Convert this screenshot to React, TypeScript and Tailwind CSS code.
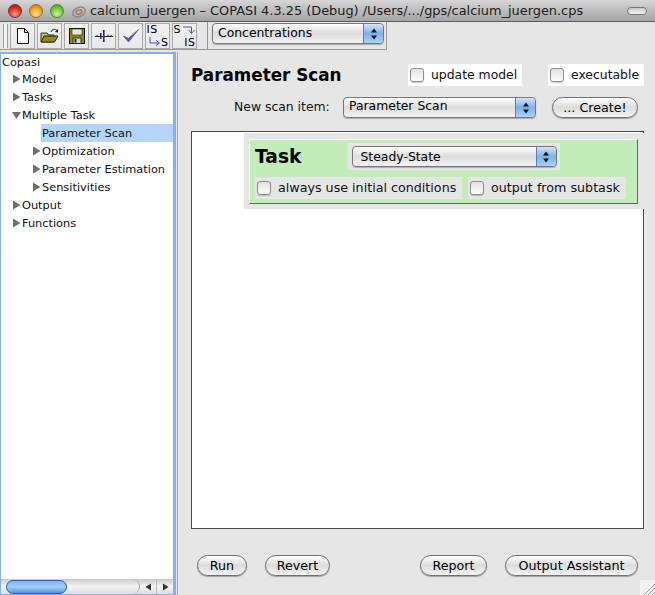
import React from "react";

const glossy = "bg-gradient-to-b from-[#ffffff] via-[#dcdcdc] to-[#f4f4f4]";

function Stepper() {
  return (
    <span className="flex w-[20px] shrink-0 self-stretch flex-col items-center justify-center gap-[2px] rounded-r-[4px] border-l border-[#5f7fae] bg-gradient-to-b from-[#d4e4f8] via-[#7fb0ec] to-[#a9d2fb]">
      <svg width="8" height="5" viewBox="0 0 8 5"><path d="M4 0.5 L7 4.5 L1 4.5 Z" fill="#111" /></svg>
      <svg width="8" height="5" viewBox="0 0 8 5"><path d="M4 4.5 L7 0.5 L1 0.5 Z" fill="#111" /></svg>
    </span>
  );
}

function Select({ label, className, textClass }: { label: string; className: string; textClass: string }) {
  return (
    <div className={`flex h-[21px] items-stretch overflow-hidden rounded-[4px] border border-[#777] ${glossy} shadow-[0_1px_1px_rgba(0,0,0,0.25)] ${className}`}>
      <span className={`flex-1 text-[12.4px] leading-[16px] text-black ${textClass}`}>{label}</span>
      <Stepper />
    </div>
  );
}

function Pill({ label, className }: { label: string; className: string }) {
  return (
    <button className={`flex h-[21px] items-center justify-center rounded-full border border-[#707070] ${glossy} text-[12.7px] text-black shadow-[0_1px_1px_rgba(0,0,0,0.3)] ${className}`}>
      {label}
    </button>
  );
}

function Check() {
  return <span className="h-[14px] w-[14px] shrink-0 rounded-[3px] border border-[#8f8f8f] bg-gradient-to-b from-[#e2e2e2] to-[#fdfdfd] shadow-[0_1px_1px_rgba(0,0,0,0.2)]" />;
}

function ToolBtn({ children }: { children: React.ReactNode }) {
  return (
    <div className="relative flex h-[26px] w-[25px] items-center justify-center bg-gradient-to-b from-[#f2f2f2] to-[#e8e8e8] shadow-[inset_0_0_0_1px_#a9a9a9]">
      {children}
    </div>
  );
}

function Caret({ open }: { open?: boolean }) {
  return (
    <svg width="10" height="10" viewBox="0 0 10 10" className="shrink-0">
      {open ? <path d="M0 2 L9 2 L4.5 9 Z" fill="#6f6f6f" /> : <path d="M1 0.5 L8.5 5 L1 9.5 Z" fill="#6f6f6f" />}
    </svg>
  );
}

function TreeRow({ label, level, open }: { label: string; level: 1 | 2; open?: boolean }) {
  const pad = level === 1 ? "pl-[10px]" : "pl-[30px]";
  return (
    <div className={`flex h-[18px] items-center ${pad}`}>
      <Caret open={open} />
      <span className="flex h-[18px] flex-1 items-center whitespace-nowrap">{label}</span>
    </div>
  );
}

export default function App() {
  return (
    <div className="flex h-[595px] w-[655px] flex-col overflow-hidden bg-[#e6e6e6] font-['DejaVu_Sans',sans-serif] text-[12px] text-[#111]">
      {/* Title bar */}
      <div className="flex h-[22px] shrink-0 items-center border-b border-[#5e5e5e] bg-gradient-to-b from-[#d6d6d6] to-[#a4a4a4] pl-[8px] pr-[8px]">
        <span className="h-[14px] w-[14px] rounded-full border border-[#8a2a22] bg-[radial-gradient(circle_at_50%_75%,#ff9d8d,#d8281c_60%,#a81810)]" />
        <span className="ml-[7px] h-[14px] w-[14px] rounded-full border border-[#a06a20] bg-[radial-gradient(circle_at_50%_75%,#ffe29a,#ee9a22_60%,#b86c10)]" />
        <span className="ml-[7px] h-[14px] w-[14px] rounded-full border border-[#4d8a2a] bg-[radial-gradient(circle_at_50%_75%,#c9f59a,#6cc03a_60%,#3f8a20)]" />
        <svg width="16" height="14" viewBox="0 0 16 14" className="ml-[7px]">
          <ellipse cx="8" cy="8" rx="6.5" ry="4.5" fill="none" stroke="#8d8d85" strokeWidth="1.6" transform="rotate(-25 8 8)" />
          <ellipse cx="8" cy="8" rx="3" ry="2" fill="none" stroke="#b0705a" strokeWidth="1.4" transform="rotate(-25 8 8)" />
        </svg>
        <span className="ml-[3px] whitespace-nowrap text-[12.9px] text-[#1c1c1c]">calcium_juergen – COPASI 4.3.25 (Debug) /Users/.../gps/calcium_juergen.cps</span>
        <span className="ml-auto h-[8px] w-[20px] rounded-full border border-[#777] bg-gradient-to-b from-[#c8c8c8] to-[#f5f5f5]" />
      </div>

      {/* Toolbar */}
      <div className="flex h-[29px] shrink-0 items-start">
        <div className="flex h-[28px] w-[207px] items-end border-b border-[#9a9a9a] pl-[3px]">
          <div className="mb-[1px] mr-[2px] h-[24px] w-[5px] shrink-0 border-x border-[#a0a0a0] bg-[#f2f2f2]" />
          <div className="flex gap-[2px]">
            <ToolBtn>
              <svg width="14" height="18" viewBox="0 0 14 18"><path d="M1.5 1.5 H8.5 L12.5 5.5 V16.5 H1.5 Z" fill="#fff" stroke="#111" /><path d="M8.5 1.5 V5.5 H12.5" fill="none" stroke="#111" /></svg>
            </ToolBtn>
            <ToolBtn>
              <svg width="20" height="18" viewBox="0 0 20 18">
                <path d="M1 15 V6 H7 L8.5 8 H14 V15 Z" fill="#c9c35a" stroke="#333" />
                <path d="M1 15 L4 9 H18 L14.5 15 Z" fill="#8f8b1e" stroke="#222" />
                <path d="M11 5 C12 2 15 1.5 17 3.5" fill="none" stroke="#222" />
                <path d="M18 2 L18 5.5 L14.8 5 Z" fill="#222" />
              </svg>
            </ToolBtn>
            <ToolBtn>
              <svg width="16" height="16" viewBox="0 0 16 16">
                <rect x="0.5" y="0.5" width="15" height="15" fill="#8c8a1a" stroke="#111" />
                <rect x="3" y="1" width="10" height="6" fill="#e8e8d0" stroke="#222" strokeWidth="0.6" />
                <rect x="4" y="10" width="8" height="5.5" fill="#d8d8d8" stroke="#111" strokeWidth="0.8" />
                <rect x="5.5" y="11" width="2" height="3.5" fill="#222" />
              </svg>
            </ToolBtn>
            <ToolBtn>
              <svg width="20" height="14" viewBox="0 0 20 14">
                <path d="M1 7.5 H19" stroke="#222" />
                <rect x="6" y="4" width="1.6" height="6" fill="#2a2a7a" />
                <rect x="9" y="1" width="1.6" height="12" fill="#2a2a7a" />
                <path d="M3 6 V8 M14 5.5 V8 M17 6 V8" stroke="#333" />
              </svg>
            </ToolBtn>
            <ToolBtn>
              <svg width="18" height="16" viewBox="0 0 18 16"><path d="M1.5 8 L6.5 14 L16.5 1.5 L6.5 10.5 Z" fill="#5a5ab4" stroke="#4f4faa" strokeWidth="0.8" /></svg>
            </ToolBtn>
            <ToolBtn>
              <div className="relative h-[24px] w-[22px] text-[11px] leading-[11px] tracking-[0.5px] text-black">
                <span className="absolute left-0 top-0">IS</span>
                <span className="absolute right-0 bottom-0">S</span>
                <svg width="12" height="10" viewBox="0 0 12 10" className="absolute left-[2px] bottom-[1px]"><path d="M1 0 V6 H10 M7 3.5 L10.5 6 L7 8.5" fill="none" stroke="#4a55b8" strokeWidth="1" /></svg>
              </div>
            </ToolBtn>
            <ToolBtn>
              <div className="relative h-[24px] w-[22px] text-[11px] leading-[11px] tracking-[0.5px] text-black">
                <span className="absolute left-0 top-0">S</span>
                <span className="absolute right-0 bottom-0">IS</span>
                <svg width="12" height="10" viewBox="0 0 12 10" className="absolute right-[1px] top-[1px]"><path d="M0 2 H8.5 V8 M5.5 5 L8.5 8.5 L11.5 5" fill="none" stroke="#4a55b8" strokeWidth="1" /></svg>
              </div>
            </ToolBtn>
          </div>
        </div>
        <div className="flex h-[28px] w-[180px] items-start border-b border-r border-l border-[#9a9a9a] pl-[4px] pt-[1px]">
          <Select label="Concentrations" className="w-[172px]" textClass="pl-[5px] pt-[1px]" />
        </div>
      </div>

      {/* Body */}
      <div className="mt-[1px] flex min-h-0 flex-1">
        {/* Tree */}
        <div className="flex w-[175px] shrink-0 flex-col border-2 border-b-[1px] border-[#84b3e6] border-l-[1px] bg-white">
          <div className="flex-1 pl-[1px] text-[11.35px] leading-[18px]">
            <div className="flex h-[16px] items-center">Copasi</div>
            <TreeRow level={1} label="Model" />
            <TreeRow level={1} label="Tasks" />
            <TreeRow level={1} open label="Multiple Task" />
            <div className="flex h-[18px] pl-[39px]"><span className="flex flex-1 items-center bg-[#b5d5ff] pl-[1px]">Parameter Scan</span></div>
            <TreeRow level={2} label="Optimization" />
            <TreeRow level={2} label="Parameter Estimation" />
            <TreeRow level={2} label="Sensitivities" />
            <TreeRow level={1} label="Output" />
            <TreeRow level={1} label="Functions" />
          </div>
          {/* Scrollbar */}
          <div className="flex h-[15px] shrink-0 items-center bg-gradient-to-b from-[#c9c9c9] via-[#f4f4f4] to-[#dedede] pl-[5px]">
            <div className="h-[14px] w-[61px] rounded-full border border-[#2d5fa8] bg-gradient-to-b from-[#7fb3ee] via-[#9fd0f8] to-[#4f94e2]" />
            <div className="flex-1 self-stretch rounded-r-full border-r border-[#aaa]" />
            <div className="flex h-full w-[17px] items-center justify-center border-r border-[#bbb]">
              <svg width="7" height="8" viewBox="0 0 7 8"><path d="M6 0.5 V7.5 L0.5 4 Z" fill="#333" /></svg>
            </div>
            <div className="flex h-full w-[16px] items-center justify-center">
              <svg width="7" height="8" viewBox="0 0 7 8"><path d="M1 0.5 V7.5 L6.5 4 Z" fill="#333" /></svg>
            </div>
          </div>
        </div>

        {/* Splitter */}
        <div className="w-[3px] shrink-0 border-x border-[#a8a8a8] bg-[#e6e6e6]" />

        {/* Main */}
        <div className="flex min-w-0 flex-1 flex-col pl-[13px] pr-[11px]">
          <div className="flex h-[44px] items-start">
            <div className="mt-[11px] w-[150px] shrink-0 whitespace-nowrap text-[16.8px] font-bold leading-[24px] text-black">Parameter Scan</div>
            <div className="ml-[67px] mt-[12px] flex h-[22px] w-[114px] shrink-0 items-center gap-[7px] bg-white pl-[2px] text-[12.4px]">
              <Check />update model
            </div>
            <div className="ml-[26px] mt-[12px] flex h-[22px] w-[96px] shrink-0 items-center gap-[7px] bg-white pl-[2px] text-[12.4px]">
              <Check />executable
            </div>
          </div>
          <div className="flex h-[23px] items-center">
            <span className="ml-[43px] w-[96px] whitespace-nowrap text-[12.4px]">New scan item:</span>
            <Select label="Parameter Scan" className="ml-[13px] w-[193px]" textClass="pl-[5px]" />
            <Pill label="... Create!" className="ml-[16px] w-[86px]" />
          </div>

          {/* Scan area */}
          <div className="mt-[12px] h-[398px] border border-[#4a4a4a] bg-white pl-[52px] pt-[1px]">
            <div className="h-[76px] w-[400px] bg-[#e6e6e6] px-[5px] pt-[6px]">
              <div className="h-[65px] w-[389px] border border-b-[#666] border-r-[#666] border-l-white border-t-white bg-[#c2edb8]">
                <div className="flex h-[33px] items-center pl-[5px]">
                  <span className="w-[47px] whitespace-nowrap text-[18.7px] font-bold leading-[24px] text-black">Task</span>
                  <div className="ml-[46px] flex h-[27px] w-[212px] items-center justify-center bg-[#e6e6e6]">
                    <Select label="Steady-State" className="w-[205px]" textClass="pl-[8px] pt-[2px]" />
                  </div>
                </div>
                <div className="mt-[4px] flex pl-[5px]">
                  <div className="flex h-[22px] w-[207px] items-center gap-[7px] bg-[#e6e6e6] pl-[2px] text-[12.7px]">
                    <Check />always use initial conditions
                  </div>
                  <div className="ml-[6px] flex h-[22px] w-[158px] items-center gap-[7px] bg-[#e6e6e6] pl-[2px] text-[12.7px]">
                    <Check />output from subtask
                  </div>
                </div>
              </div>
            </div>
          </div>

          {/* Bottom */}
          <div className="mt-[26px] flex items-center pl-[6px]">
            <Pill label="Run" className="w-[50px]" />
            <Pill label="Revert" className="ml-[18px] w-[65px]" />
            <Pill label="Report" className="ml-auto w-[67px]" />
            <Pill label="Output Assistant" className="ml-[18px] mr-[6px] w-[133px]" />
          </div>
          <div className="relative flex-1">
            <svg width="15" height="15" viewBox="0 0 15 15" className="absolute -right-[11px] bottom-0">
              <rect width="15" height="15" fill="#f2f2f2" />
              <path d="M4 15 L15 4 M8 15 L15 8 M12 15 L15 12" stroke="#9a9a9a" />
            </svg>
          </div>
        </div>
      </div>
    </div>
  );
}
